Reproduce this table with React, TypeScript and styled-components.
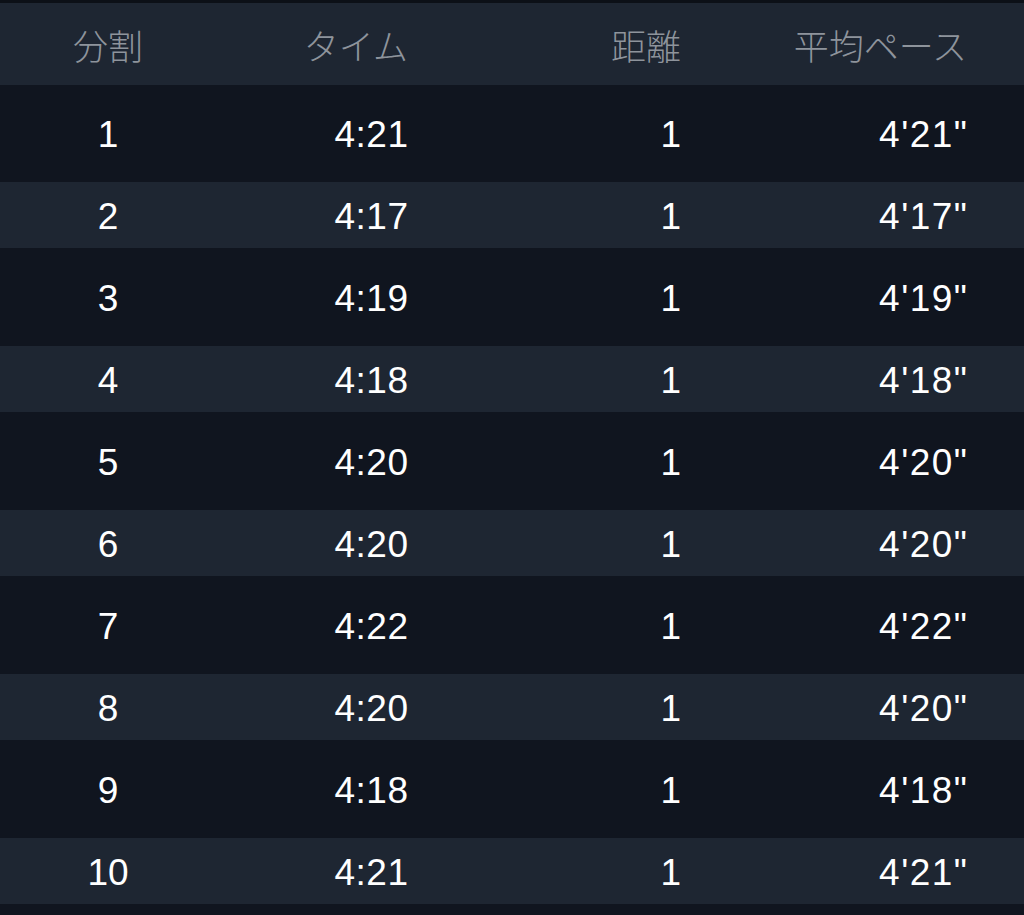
import React from "react";
import styled, { createGlobalStyle } from "styled-components";

const GlobalStyle = createGlobalStyle`
  html, body {
    margin: 0;
    padding: 0;
    background: #10151f;
  }
  * { box-sizing: border-box; }
`;

const Table = styled.div`
  width: 1024px;
  height: 915px;
  background: #10151f;
  border-top: 3px solid #0c1017;
  font-family: "Liberation Sans", Arial, "Noto Sans CJK JP", sans-serif;
  overflow: hidden;
`;

const Grid = styled.div`
  display: grid;
  grid-template-columns: 216px 192px 273px 1fr;
  padding-right: 57px;
  align-items: center;
`;

const HeaderRow = styled(Grid)`
  height: 82px;
  background: #1e2632;
`;

const HeadCell = styled.div<{ $center?: boolean }>`
  font-family: "Noto Sans CJK JP", sans-serif;
  font-weight: 300;
  font-size: 35px;
  color: #8e949c;
  text-align: ${(p) => (p.$center ? "center" : "right")};
  line-height: 1;
`;

const Body = styled.div`
  padding-top: 7px;
`;

const Row = styled.div`
  height: 82px;
  padding: 8px 0;
`;

const Band = styled(Grid)<{ $striped: boolean }>`
  height: 66px;
  background: ${(p) => (p.$striped ? "#1e2632" : "transparent")};
`;

const Cell = styled.div<{ $center?: boolean; $spacing?: number }>`
  font-size: 37px;
  color: #ffffff;
  text-align: ${(p) => (p.$center ? "center" : "right")};
  line-height: 1;
  padding-top: 2px;
  letter-spacing: ${(p) => p.$spacing ?? 0}px;
  margin-right: ${(p) => -(p.$spacing ?? 0)}px;
`;

const splits = [
  ["4:21", "4'21\""],
  ["4:17", "4'17\""],
  ["4:19", "4'19\""],
  ["4:18", "4'18\""],
  ["4:20", "4'20\""],
  ["4:20", "4'20\""],
  ["4:22", "4'22\""],
  ["4:20", "4'20\""],
  ["4:18", "4'18\""],
  ["4:21", "4'21\""],
];

export default function App() {
  return (
    <>
      <GlobalStyle />
      <Table>
        <HeaderRow>
          <HeadCell $center>分割</HeadCell>
          <HeadCell>タイム</HeadCell>
          <HeadCell>距離</HeadCell>
          <HeadCell>平均ペース</HeadCell>
        </HeaderRow>
        <Body>
          {splits.map(([time, pace], i) => (
            <Row key={i}>
              <Band $striped={i % 2 === 1}>
                <Cell $center>{i + 1}</Cell>
                <Cell $spacing={0.5}>{time}</Cell>
                <Cell>1</Cell>
                <Cell $spacing={1.5}>{pace}</Cell>
              </Band>
            </Row>
          ))}
        </Body>
      </Table>
    </>
  );
}
